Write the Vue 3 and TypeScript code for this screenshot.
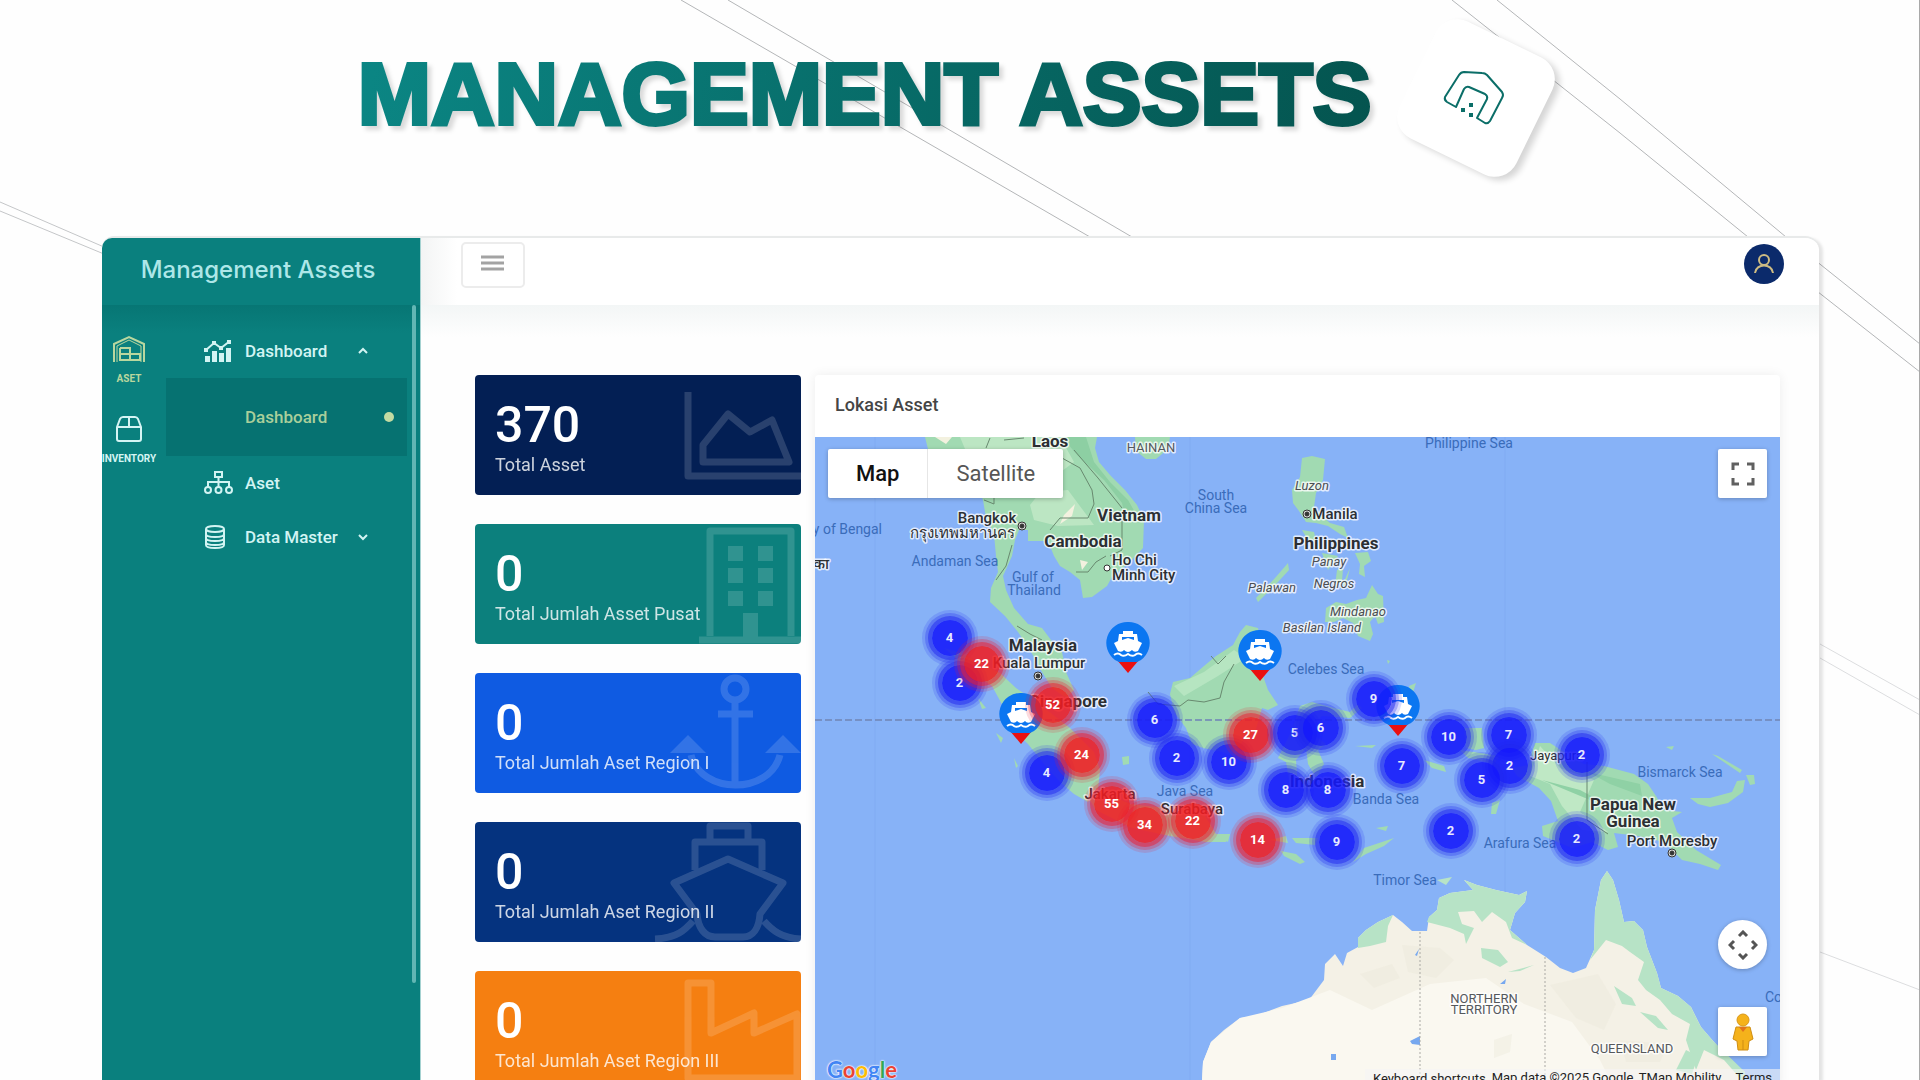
<script setup lang="ts">
interface Stat {
  value: number
  label: string
  tone: string
  shapes: string[]
  fills?: string[]
}

interface Cluster {
  x: number
  y: number
  count: number
  hot?: boolean
}

interface MapLabel {
  x: number
  y: number
  text: string
  kind: string
  anchor?: 'start' | 'middle' | 'end'
}

const stats: Stat[] = [
  {
    value: 370,
    label: 'Total Asset',
    tone: 'navy',
    shapes: ['M213 17V101H326', 'M228 87V70L253 39L275 57L297 45L314 87Z'],
  },
  {
    value: 0,
    label: 'Total Jumlah Asset Pusat',
    tone: 'teal',
    shapes: ['M235 112V7H316V112', 'M224 116H326'],
    fills: [
      'M253 22h15v15h-15zM283 22h15v15h-15zM253 44h15v15h-15zM283 44h15v15h-15zM253 67h15v15h-15zM283 67h15v15h-15z',
      'M268 89h15v24h-15z',
    ],
  },
  {
    value: 0,
    label: 'Total Jumlah Aset Region I',
    tone: 'blue',
    shapes: ['M260 5a11 11 0 1 1 0 22a11 11 0 1 1 0-22', 'M243 41H278', 'M260 28V110', 'M216 82C226 122 295 122 305 82'],
    fills: ['M213 62L231 80H195ZM308 62L326 80H290Z'],
  },
  {
    value: 0,
    label: 'Total Jumlah Aset Region II',
    tone: 'royal',
    shapes: [
      'M235 18V4H273V18',
      'M220 48V20H287V48',
      'M222 92L199 61L253 37L308 61L285 92C284 106 278 115 268 115H240C230 115 223 106 222 92Z',
      'M180 117C202 116 210 108 218 99',
      'M289 99C297 108 306 116 326 117',
    ],
  },
  {
    value: 0,
    label: 'Total Jumlah Aset Region III',
    tone: 'orange',
    shapes: ['M213 12H236V62L279 42V62L322 43V107H213Z'],
  },
]

const clusters: Cluster[] = [
  { x: 135, y: 201, count: 4 },
  { x: 145, y: 246, count: 2 },
  { x: 167, y: 227, count: 22, hot: true },
  { x: 238, y: 268, count: 52, hot: true },
  { x: 232, y: 336, count: 4 },
  { x: 267, y: 318, count: 24, hot: true },
  { x: 297, y: 367, count: 55, hot: true },
  { x: 330, y: 388, count: 34, hot: true },
  { x: 378, y: 384, count: 22, hot: true },
  { x: 443, y: 403, count: 14, hot: true },
  { x: 340, y: 283, count: 6 },
  { x: 362, y: 321, count: 2 },
  { x: 414, y: 325, count: 10 },
  { x: 436, y: 298, count: 27, hot: true },
  { x: 480, y: 296, count: 5 },
  { x: 506, y: 291, count: 6 },
  { x: 471, y: 353, count: 8 },
  { x: 513, y: 353, count: 8 },
  { x: 522, y: 405, count: 9 },
  { x: 559, y: 262, count: 9 },
  { x: 587, y: 329, count: 7 },
  { x: 634, y: 300, count: 10 },
  { x: 694, y: 298, count: 7 },
  { x: 695, y: 329, count: 2 },
  { x: 667, y: 343, count: 5 },
  { x: 636, y: 394, count: 2 },
  { x: 767, y: 318, count: 2 },
  { x: 762, y: 402, count: 2 },
]

const ships = [
  { x: 313, y: 206 },
  { x: 445, y: 214 },
  { x: 206, y: 277 },
  { x: 583, y: 269 },
]

const labels: MapLabel[] = [
  { x: 1050, y: 447, text: 'Laos', kind: 'country' },
  { x: 1129, y: 521, text: 'Vietnam', kind: 'country' },
  { x: 1083, y: 547, text: 'Cambodia', kind: 'country' },
  { x: 1043, y: 651, text: 'Malaysia', kind: 'country' },
  { x: 1107, y: 707, text: 'Singapore', kind: 'country', anchor: 'end' },
  { x: 1336, y: 549, text: 'Philippines', kind: 'country' },
  { x: 1327, y: 787, text: 'Indonesia', kind: 'country' },
  { x: 1633, y: 810, text: 'Papua New', kind: 'country' },
  { x: 1633, y: 827, text: 'Guinea', kind: 'country' },
  { x: 987, y: 523, text: 'Bangkok', kind: 'city' },
  { x: 962, y: 538, text: 'กรุงเทพมหานคร', kind: 'city' },
  { x: 829, y: 569, text: 'का', kind: 'city', anchor: 'end' },
  { x: 1112, y: 565, text: 'Ho Chi', kind: 'city', anchor: 'start' },
  { x: 1112, y: 580, text: 'Minh City', kind: 'city', anchor: 'start' },
  { x: 1039, y: 668, text: 'Kuala Lumpur', kind: 'city' },
  { x: 1335, y: 519, text: 'Manila', kind: 'city' },
  { x: 1110, y: 799, text: 'Jakarta', kind: 'city' },
  { x: 1192, y: 814, text: 'Surabaya', kind: 'city' },
  { x: 1672, y: 846, text: 'Port Moresby', kind: 'city' },
  { x: 1530, y: 760, text: 'Jayapura', kind: 'town', anchor: 'start' },
  { x: 1312, y: 490, text: 'Luzon', kind: 'island' },
  { x: 1329, y: 566, text: 'Panay', kind: 'island' },
  { x: 1334, y: 588, text: 'Negros', kind: 'island' },
  { x: 1272, y: 592, text: 'Palawan', kind: 'island' },
  { x: 1358, y: 616, text: 'Mindanao', kind: 'island' },
  { x: 1322, y: 632, text: 'Basilan Island', kind: 'island' },
  { x: 882, y: 534, text: 'y of Bengal', kind: 'sea', anchor: 'end' },
  { x: 955, y: 566, text: 'Andaman Sea', kind: 'sea' },
  { x: 1033, y: 582, text: 'Gulf of', kind: 'sea' },
  { x: 1034, y: 595, text: 'Thailand', kind: 'sea' },
  { x: 1216, y: 500, text: 'South', kind: 'sea' },
  { x: 1216, y: 513, text: 'China Sea', kind: 'sea' },
  { x: 1469, y: 448, text: 'Philippine Sea', kind: 'sea' },
  { x: 1326, y: 674, text: 'Celebes Sea', kind: 'sea' },
  { x: 1185, y: 796, text: 'Java Sea', kind: 'sea' },
  { x: 1386, y: 804, text: 'Banda Sea', kind: 'sea' },
  { x: 1680, y: 777, text: 'Bismarck Sea', kind: 'sea' },
  { x: 1520, y: 848, text: 'Arafura Sea', kind: 'sea' },
  { x: 1405, y: 885, text: 'Timor Sea', kind: 'sea' },
  { x: 1765, y: 1002, text: 'Coral Sea', kind: 'sea', anchor: 'start' },
  { x: 1151, y: 452, text: 'HAINAN', kind: 'state' },
  { x: 1484, y: 1003, text: 'NORTHERN', kind: 'state' },
  { x: 1484, y: 1014, text: 'TERRITORY', kind: 'state' },
  { x: 1632, y: 1053, text: 'QUEENSLAND', kind: 'state' },
]

const capitals = [
  [1022, 526],
  [1038, 676],
  [1307, 514],
  [1672, 853],
]
</script>

<template>
  <div class="page">
    <svg class="lines" aria-hidden="true">
      <g stroke="#b4b6b8" stroke-width="1">
        <path d="M681 0L1090 237M728 0L1132 237" />
        <path d="M1452 0L1620 133L1748 237L1920 372M1497 0L1620 99L1786 237L1920 344" />
        <path d="M0 202L104 247M0 211L104 254" stroke="#c4c6c8" />
        <path d="M1820 644L1920 700M1820 658L1920 715M1820 952L1920 990" stroke="#dcdddf" />
      </g>
    </svg>

    <header class="hero">
      <h1>MANAGEMENT ASSETS</h1>
      <div class="badge">
        <svg width="130" height="130" viewBox="0 0 130 130" fill="none" stroke="#0b6e68" stroke-width="2" stroke-linejoin="round" aria-hidden="true">
          <path d="M45 74L36 69Q33 67 34 64L48 42Q50 39 53 39L71 40Q74 40 76 42L91 59Q93 62 91 65L79 88Q77 91 74 90L66 85L76 66Q77 63 74 61L58 54Q55 53 53 56Z" />
          <path d="M58 70h4v4h-4zM50 75h4v4h-4zM58 80h4v4h-4z" fill="#0b6e68" stroke="none" />
        </svg>
      </div>
    </header>

    <div class="panel">
      <aside class="sidebar">
        <div class="brand">Management Assets</div>
        <div class="side-body">
          <nav class="rail" aria-label="Modul">
            <a href="#aset" class="rail-item current">
              <svg width="34" height="28" viewBox="0 0 34 28" fill="none" stroke="currentColor" stroke-width="2" aria-hidden="true">
                <path d="M2 27V9L17 2L32 9V27M8 13H18V25H8V13M8 19H28V25H8M18 19V25" />
                <path d="M5 27V11L17 5L29 11V27" stroke-width="1" />
              </svg>
              ASET
            </a>
            <a href="#inventory" class="rail-item">
              <svg width="34" height="28" viewBox="0 0 34 28" fill="none" stroke="currentColor" stroke-width="2" stroke-linejoin="round" aria-hidden="true">
                <path d="M5 12L8 4Q9 2 11 2H23Q25 2 26 4L29 12V24Q29 26 27 26H7Q5 26 5 24ZM5 12H29M17 2V12" />
              </svg>
              INVENTORY
            </a>
          </nav>
          <nav class="menu" aria-label="Menu">
            <button type="button" class="menu-item first">
              <svg width="29" height="24" viewBox="0 0 29 24" aria-hidden="true">
                <path d="M1 17h5v6H1zM8 12h5v11H8zM15 14h5v9h-5zM22 9h5v14h-5z" fill="currentColor" />
                <path d="M2 11L10 4L17 9L26 2" fill="none" stroke="currentColor" stroke-width="2" />
                <path d="M0 9h4v4H0zM8 2h4v4H8zM15 7h4v4h-4zM23 1h4v4h-4z" fill="currentColor" />
              </svg>
              <span class="menu-text">Dashboard</span>
              <svg class="chevron" width="12" height="8" viewBox="0 0 12 8" fill="none" stroke="currentColor" stroke-width="2" aria-hidden="true"><path d="M2 6L6 2L10 6" /></svg>
            </button>
            <a href="#dashboard" class="submenu">Dashboard<i class="dot"></i></a>
            <a href="#daftar" class="menu-item">
              <svg width="29" height="24" viewBox="0 0 29 24" fill="none" stroke="currentColor" stroke-width="2" aria-hidden="true">
                <path d="M11 1h7v5h-7zM14.500 6V17M4 16V11H25V16" />
                <circle cx="4" cy="19" r="3" /><circle cx="14.500" cy="19" r="3" /><circle cx="25" cy="19" r="3" />
              </svg>
              <span class="menu-text">Aset</span>
            </a>
            <button type="button" class="menu-item">
              <svg width="29" height="24" viewBox="0 0 29 24" fill="none" stroke="currentColor" stroke-width="2" aria-hidden="true">
                <ellipse cx="11" cy="4" rx="9" ry="3" />
                <path d="M2 4V20C2 24 20 24 20 20V4M2 9C2 13 20 13 20 9M2 13C2 17 20 17 20 13M2 17C2 21 20 21 20 17" />
              </svg>
              <span class="menu-text">Data Master</span>
              <svg class="chevron" width="12" height="8" viewBox="0 0 12 8" fill="none" stroke="currentColor" stroke-width="2" aria-hidden="true"><path d="M2 2L6 6L10 2" /></svg>
            </button>
          </nav>
          <div class="scrollbar"></div>
        </div>
      </aside>

      <div class="main">
        <div class="topbar">
          <button type="button" class="burger" aria-label="Menu">
            <svg width="24" height="16" viewBox="0 0 24 16" stroke="#a3a3a3" stroke-width="3" aria-hidden="true"><path d="M0 2H23M0 8H23M0 14H23" /></svg>
          </button>
          <button type="button" class="avatar" aria-label="Profil">
            <svg width="24" height="22" viewBox="0 0 24 22" fill="none" stroke="#cdbb83" stroke-width="2" aria-hidden="true">
              <circle cx="12" cy="7" r="5" /><path d="M3 20C4 10 20 10 21 20" />
            </svg>
          </button>
        </div>

        <div class="content">
          <div class="stats">
            <article v-for="stat in stats" :key="stat.label" class="stat" :class="stat.tone">
              <svg class="watermark" width="326" height="120" viewBox="0 0 326 120" aria-hidden="true">
                <path v-for="d in stat.shapes" :key="d" :d="d" fill="none" stroke="#fff" stroke-width="7" stroke-linejoin="round" />
                <path v-for="d in stat.fills" :key="d" :d="d" fill="#fff" />
              </svg>
              <strong>{{ stat.value }}</strong>
              <span>{{ stat.label }}</span>
            </article>
          </div>

          <section class="map-card">
            <h2>Lokasi Asset</h2>
            <div class="map">
              <div class="canvas">
                <svg class="terrain" width="965" height="660" viewBox="815 437 965 660" aria-label="Peta lokasi asset">
                  <g stroke="#80abf2" stroke-width="1"><path d="M875 437V1100M1190 437V1100M1505 437V1100" /></g>
                  <g fill="#a1dab2">
                    <path d="M925 437L928 449L940 455L950 452L962 470L975 480L983 500L986 518L994 534L996 556L998 572L991 588L990 602L1005 616L1018 632L1030 650L1042 672L1052 688L1066 698L1074 690L1066 672L1062 652L1054 644L1042 628L1028 624L1014 608L1006 590L1003 576L1012 556L1015 540L1019 530L1028 530L1028 541L1048 541L1054 556L1060 566L1070 572L1080 580L1083 598L1092 597L1107 586L1112 577L1130 562L1143 548L1144 520L1137 505L1125 490L1110 475L1099 462L1095 448L1097 437Z" />
                    <path d="M1135 437H1170L1168 449L1156 459H1146L1136 451Z" />
                    <path d="M1302 458L1312 456L1325 459L1323 480L1316 493L1314 507L1322 516L1330 523L1344 527L1348 538L1340 534L1328 526L1316 523L1306 522L1299 511L1293 503L1292 490L1300 477Z" />
                    <path d="M1302 530L1314 532L1316 541L1308 540ZM1355 553L1368 552L1371 561L1364 566L1365 577L1359 574L1360 564ZM1322 553L1338 556L1328 570ZM1337 570L1343 568L1342 582L1335 586ZM1350 568L1346 584L1342 586ZM1288 563L1289 570L1278 582L1258 602L1256 598L1275 578Z" />
                    <path d="M1372 585L1378 594L1383 596L1384 622L1378 624L1375 616L1370 622L1373 634L1370 641L1358 636L1353 623L1343 618L1334 622L1325 622L1326 608L1336 602L1346 604L1357 600L1366 598Z" />
                    <path d="M1246 625L1258 628L1262 650L1265 660L1263 676L1268 690L1278 705L1268 710L1262 708L1258 722L1254 736L1243 740L1235 757L1222 752L1203 748L1192 744L1186 728L1174 712L1170 694L1173 682L1190 678L1204 666L1216 656L1233 645L1240 632Z" />
                    <path d="M944 648L962 653L978 662L1000 673L1016 688L1036 702L1052 714L1070 728L1082 740L1094 752L1100 770L1098 790L1088 802L1074 794L1060 782L1044 764L1028 744L1012 728L1004 708L992 686L972 672Z" />
                    <path d="M1086 794L1104 792L1130 804L1166 808L1180 806L1204 814L1216 834L1230 834L1226 842L1206 842L1170 836L1132 828L1096 810Z" />
                    <path d="M1218 836L1230 834L1228 842ZM1270 840L1286 836L1288 843ZM1292 838L1318 838L1315 845L1296 843ZM1281 851L1296 854L1305 862L1300 864L1284 856ZM1353 862L1364 848L1394 838L1384 846L1366 854ZM1376 828L1388 826L1386 831ZM1355 746L1376 745L1372 748ZM1122 757L1129 756L1129 764L1123 765Z" />
                    <path d="M1300 706L1312 702L1334 708L1350 712L1358 704L1362 708L1350 718L1322 716L1308 730L1326 744L1318 750L1324 764L1316 778L1308 764L1306 748L1296 760L1298 786L1290 786L1286 762L1278 758L1290 734Z" />
                    <path d="M996 733L1003 738L1001 743ZM1014 758L1018 766L1016 768ZM978 698L986 708L982 709ZM1409 686L1416 683L1412 696ZM1424 760L1444 766L1446 772L1432 768ZM1464 728L1482 728L1484 748L1476 750L1466 748ZM1460 750L1500 756L1494 764L1468 758ZM1492 803L1500 800L1496 814L1491 814ZM1387 660L1390 661L1388 664Z" />
                    <path d="M1535 743L1550 743L1564 752L1584 764L1604 766L1634 774L1648 784L1656 796L1664 810L1682 812L1672 818L1677 832L1696 850L1721 865L1718 870L1700 864L1682 860L1664 842L1638 836L1614 833L1618 847L1608 850L1592 842L1572 848L1543 836L1542 826L1558 821L1551 801L1539 788L1517 776L1512 768L1528 765Z" />
                    <path d="M1690 798L1710 798L1732 792L1737 781L1745 780L1743 792L1728 803L1710 807L1698 804ZM1712 754L1718 756L1742 770L1740 773ZM1746 775L1754 775L1755 784L1750 785ZM1666 747L1674 746L1672 750Z" />
                  </g>
                  <path d="M960 437L978 480L1020 494L1068 490L1094 525L1058 526L1034 520L1030 505L1050 480L1074 462L1060 437Z" fill="#bce6c3" />
                  <path d="M1062 437L1078 456L1104 480L1122 503L1126 520L1136 514L1128 500L1110 482L1094 462L1086 437Z" fill="#8dcfa3" />
                  <path d="M1174 686L1204 672L1234 650L1246 658L1218 676L1184 696Z" fill="#b6e5c1" />
                  <path d="M1540 746L1560 768L1594 780L1580 812L1608 832L1582 830L1562 806L1550 784L1530 776Z" fill="#bfe8c5" />
                  <path d="M1588 772L1640 784L1642 796L1610 784ZM1542 780L1580 790L1610 806L1590 800Z" fill="#8fd1a5" />
                  <path d="M935 437L952 437L946 444ZM1064 515L1075 504L1072 516L1060 524ZM1080 560L1088 562L1082 570Z" fill="#f3f1df" />
                  <g fill="none" stroke="#68896f" stroke-width="1">
                    <path d="M984 500L994 504V494M990 438L986 448M1062 458L1080 468L1092 490L1094 504L1088 518H1060L1050 530M1074 450L1098 478L1114 498L1122 508M1004 440L1024 438M1012 545L1006 566L996 580M1106 556L1096 562L1088 572L1076 572M1017 626L1030 634L1042 640M1122 518V550L1110 556" />
                    <path d="M1148 692L1158 704L1180 706L1188 700L1204 702L1220 698L1224 682L1234 664M1211 656L1218 664L1226 656M1587 762V820L1608 834" />
                  </g>

                  <path d="M1201 1100L1203 1062L1211 1042L1224 1030L1240 1018L1256 1016L1282 1006L1309 1000L1324 980L1325 964L1335 954L1343 966L1347 953L1358 947V938L1366 930L1378 922L1393 915L1402 922L1412 931L1427 931L1429 917L1437 910L1439 898L1450 893L1473 890L1464 880L1477 885L1496 890L1519 895L1527 891L1525 902L1515 913L1510 930L1527 945L1546 957L1560 968L1573 973L1586 968L1594 950L1595 910L1601 880L1607 871L1613 880L1619 900L1624 922L1634 921L1643 930L1647 947L1657 973L1661 988L1678 996L1691 1007L1701 1027L1714 1042L1730 1060L1745 1072V1100Z" fill="#f4f1e6" />
                  <path d="M1201 1100L1203 1062L1211 1042L1240 1018L1282 1008L1330 990L1372 1010L1430 984L1486 978L1524 1004L1572 1022L1600 1060L1620 1100Z" fill="#faf8f0" />
                  <g fill="#b7e3c6">
                    <path d="M1437 880L1452 877L1446 885Z" />
                    <path d="M1427 922L1429 917L1437 910L1439 898L1450 893L1473 890L1464 880L1477 885L1496 890L1519 895L1527 891L1525 902L1515 913L1510 930L1527 945L1512 938L1506 922L1492 912L1482 922L1474 911L1458 912L1462 924L1474 928L1466 944L1464 934L1450 928Z" />
                    <path d="M1358 948V938L1366 930L1378 922L1393 915L1388 926L1386 942L1370 946Z" />
                    <path d="M1590 960L1594 950L1595 910L1601 880L1607 871L1613 880L1619 900L1624 922L1634 921L1643 930L1647 947L1657 973L1661 988L1678 996L1691 1007L1701 1027L1714 1042L1745 1072V1084L1724 1060L1704 1050L1696 1070L1686 1040L1690 1024L1672 1014L1660 1000L1646 990L1638 980L1644 962L1630 952L1622 946L1606 940Z" />
                    <path d="M1481 948L1498 950L1508 962L1500 967L1482 958ZM1508 972L1534 965L1520 971ZM1614 986L1632 998L1636 1006L1622 1004ZM1640 1012L1656 1016L1668 1030L1658 1028ZM1686 1050L1698 1056L1692 1074L1676 1070Z" />
                  </g>
                  <g fill="#ece8da" opacity=".4">
                    <path d="M1402 945L1440 948L1454 960L1436 978L1408 972ZM1550 985L1598 974L1616 1004L1604 1030L1576 1018ZM1620 1040L1668 1044L1660 1062L1626 1062ZM1494 1040L1512 1034L1510 1052L1494 1058ZM1360 974L1392 964L1400 978L1374 988Z" />
                  </g>
                  <path d="M1410 1041L1420 1036V1045L1412 1044ZM1331 1054H1336V1060H1331ZM1500 984L1506 979L1505 984ZM1415 955L1419 949L1417 956Z" fill="#77a8ef" />
                  <path d="M1420 932V1080M1545 957V1080" stroke="#aaa9a4" stroke-width="1" stroke-dasharray="2 2" />
                  <path d="M815 720H1780" stroke="#7288b8" stroke-width="2" stroke-dasharray="7 3" opacity=".8" />

                  <g fill="none" stroke="#333" stroke-width="1">
                    <g v-for="[x, y] in capitals" :key="x">
                      <circle :cx="x" :cy="y" r="4" fill="#ddd" /><circle :cx="x" :cy="y" r="2" fill="#333" />
                    </g>
                    <circle cx="1107" cy="568" r="3" fill="#fff" />
                  </g>
                  <text v-for="label in labels" :key="label.text" :x="label.x" :y="label.y" :class="label.kind" :text-anchor="label.anchor ?? 'middle'">{{ label.text }}</text>
                </svg>

                <svg v-for="ship in ships" :key="ship.x" class="ship" :style="{ left: ship.x + 'px', top: ship.y + 'px' }" width="44" height="54" viewBox="0 0 44 54" aria-hidden="true">
                  <path d="M11 39H33L22 52Z" fill="#ea1010" />
                  <path d="M22 1A21 21 0 0 1 35 39L31 41H13L9 39A21 21 0 0 1 22 1Z" fill="#0b76f1" />
                  <path d="M17 10H27V13H31L32 20L36 22L32 30Q28 32 26 29Q22 33 18 29Q16 32 12 30L8 22L12 20L13 13H17ZM16 16V19L22 17L28 19V16Z" fill="#fff" fill-rule="evenodd" />
                  <path d="M8 34Q12 31 15 34Q18 36 22 33Q26 36 29 34Q32 31 36 34" fill="none" stroke="#fff" stroke-width="2" />
                </svg>
                <button v-for="(c, i) in clusters" :key="i" type="button" class="cluster" :class="{ hot: c.hot }" :style="{ left: c.x + 'px', top: c.y + 'px' }">{{ c.count }}</button>
              </div>

              <div class="map-type">
                <button type="button" class="selected">Map</button>
                <button type="button">Satellite</button>
              </div>
              <button type="button" class="control fullscreen" aria-label="Layar penuh">
                <svg width="24" height="24" viewBox="0 0 24 24" fill="none" stroke="#606060" stroke-width="3" aria-hidden="true"><path d="M2 8V2H8M16 2H22V8M22 16V22H16M8 22H2V16" /></svg>
              </button>
              <button type="button" class="control pan" aria-label="Geser peta">
                <svg width="30" height="30" viewBox="0 0 30 30" fill="none" stroke="#555" stroke-width="3" aria-hidden="true"><path d="M11 6L15 2L19 6M11 24L15 28L19 24M6 11L2 15L6 19M24 11L28 15L24 19" /></svg>
              </button>
              <button type="button" class="control pegman" aria-label="Street View">
                <svg width="24" height="40" viewBox="0 0 24 40" aria-hidden="true">
                  <path d="M5 15H19L22 27L18 29L17 38H7L6 29L2 27Z" fill="#f5b21b" stroke="#cf8d12" stroke-width="1" />
                  <circle cx="12" cy="8" r="6" fill="#f5b21b" stroke="#d9981a" stroke-width="1" />
                  <path d="M8 15L12 20L16 15Z" fill="#e2731d" /><path d="M12 28V38" stroke="#cf8d12" />
                </svg>
              </button>
              <div class="google" aria-label="Google"><b class="g1">G</b><b class="g2">o</b><b class="g3">o</b><b class="g1">g</b><b class="g4">l</b><b class="g2">e</b></div>
              <div class="credits">
                <button type="button">Keyboard shortcuts</button>
                <span>Map data ©2025 Google, TMap Mobility</span>
                <a href="#terms">Terms</a>
              </div>
            </div>
          </section>
        </div>
      </div>
    </div>
  </div>
</template>

<style>
body {
  margin: 0;
  background: #fefefe;
}
</style>

<style scoped>
* {
  box-sizing: border-box;
}

button {
  margin: 0;
  padding: 0;
  border: 0;
  font-family: inherit;
  cursor: pointer;
}

a {
  color: inherit;
  text-decoration: none;
}

.page {
  position: relative;
  display: flex;
  flex-direction: column;
  height: 100vh;
  overflow: hidden;
  border-right: 1px solid #a9a9a9;
  background: #fefefe;
  font-family: Roboto, 'Noto Sans', sans-serif;
}

.lines {
  position: absolute;
  inset: 0;
  width: 100%;
  height: 100%;
  fill: none;
}

.hero {
  position: relative;
  display: flex;
  flex: none;
  align-items: center;
  justify-content: center;
  gap: 36px;
  height: 236px;
  padding: 0 20px 48px 0;
}

h1 {
  margin: 0;
  background: linear-gradient(100deg, #0b8684, #04544f);
  -webkit-background-clip: text;
  background-clip: text;
  color: transparent;
  -webkit-text-stroke: 4px transparent;
  filter: drop-shadow(4px 4px 2px rgba(0, 0, 0, 0.14));
  font-family: 'Liberation Sans', Arial, sans-serif;
  font-size: 88px;
  font-weight: 700;
  line-height: 104px;
}

.badge {
  position: relative;
  width: 130px;
  height: 130px;
  margin: 8px 0 0 4px;
}

.badge::before {
  position: absolute;
  inset: 0;
  border-radius: 24px;
  background: #fff;
  box-shadow: 6px 1px 6px rgba(0, 0, 0, 0.16);
  content: '';
  transform: rotate(26deg);
}

.badge svg {
  position: relative;
  display: block;
}

.panel {
  position: relative;
  display: flex;
  flex: 1;
  margin: 0 100px 0 102px;
  border-top: 2px solid #e8eaea;
  border-radius: 12px 14px 0 0;
  background: #fff;
  box-shadow: 4px 2px 3px rgba(0, 0, 0, 0.1);
  min-height: 0;
}

.sidebar {
  display: flex;
  flex: none;
  flex-direction: column;
  width: 319px;
  border-right: 1px solid #a5d2d1;
  border-radius: 10px 0 0 0;
  background: #0a807e;
  overflow: hidden;
}

.brand {
  flex: none;
  height: 67px;
  padding-right: 6px;
  color: #aee7e8;
  font-family: Inter, sans-serif;
  font-size: 24px;
  font-weight: 500;
  line-height: 64px;
  text-align: center;
}

.side-body {
  display: flex;
  flex: 1;
  background: linear-gradient(#077674, #0a807e 28px);
}

.rail {
  display: flex;
  flex: none;
  flex-direction: column;
  gap: 30px;
  width: 54px;
  padding-top: 30px;
}

.rail-item {
  display: flex;
  flex-direction: column;
  align-items: center;
  gap: 10px;
  color: #d5f5f4;
  font-size: 10px;
  font-weight: 700;
  line-height: 12px;
}

.rail-item.current {
  color: #b9d79f;
}

.menu {
  flex: 1;
  padding: 19px 5px 0 10px;
}

.menu-item {
  display: flex;
  align-items: center;
  width: 100%;
  height: 54px;
  padding-left: 38px;
  background: none;
  color: #d2f4f3;
  font-size: 17px;
  font-weight: 500;
  text-align: left;
}

.menu-text {
  width: 112px;
  margin-left: 12px;
}

.submenu {
  display: flex;
  align-items: center;
  justify-content: space-between;
  height: 78px;
  padding: 0 13px 0 79px;
  background: #067271;
  color: #a9cf9b;
  font-size: 17px;
  font-weight: 500;
}

.dot {
  width: 10px;
  height: 10px;
  border-radius: 50%;
  background: #c3dba2;
}

.scrollbar {
  width: 4px;
  height: 678px;
  margin-right: 4px;
  border-radius: 2px;
  background: #62b6b4;
}

.main {
  display: flex;
  flex: 1;
  flex-direction: column;
  min-width: 0;
}

.topbar {
  display: flex;
  flex: none;
  align-items: flex-start;
  justify-content: space-between;
  height: 67px;
  padding: 4px 35px 0 40px;
  border-radius: 0 14px 0 0;
  background: linear-gradient(90deg, #f3f4f4, #fff 36px);
}

.burger {
  display: flex;
  align-items: center;
  justify-content: center;
  width: 64px;
  height: 46px;
  padding-bottom: 4px;
  border: 2px solid #ececec;
  border-radius: 5px;
  background: #fff;
}

.avatar {
  display: flex;
  align-items: center;
  justify-content: center;
  width: 40px;
  height: 40px;
  margin-top: 2px;
  border-radius: 50%;
  background: #0b2a6b;
}

.content {
  display: flex;
  gap: 14px;
  align-items: flex-start;
  padding: 70px 39px 0 54px;
  background: linear-gradient(#f3f6f6, #fefefe 32px);
}

.stats {
  display: flex;
  flex: none;
  flex-direction: column;
  gap: 29px;
  width: 326px;
}

.stat {
  position: relative;
  display: flex;
  flex-direction: column;
  height: 120px;
  padding: 21px 20px 0;
  border-radius: 4px;
  color: #fff;
  overflow: hidden;
}

.stat strong {
  position: relative;
  font-size: 50px;
  font-weight: 500;
  line-height: 58px;
}

.stat span {
  position: relative;
  font-size: 18px;
  line-height: 22px;
  opacity: 0.8;
}

.watermark {
  position: absolute;
  top: 0;
  right: 0;
  opacity: 0.15;
}

.navy { background: #031f54; }
.teal { background: #0c807d; }
.blue { background: #0f5be2; }
.royal { background: #05337f; }
.orange { background: #f57f11; }

.map-card {
  flex: 1;
  min-width: 0;
  border-radius: 4px;
  background: #fff;
  box-shadow: 0 0 12px rgba(0, 0, 0, 0.07);
}

h2 {
  margin: 0;
  padding: 0 20px 2px;
  color: #454545;
  font-size: 18px;
  font-weight: 500;
  line-height: 60px;
}

.map {
  position: relative;
  height: 655px;
  background: #87b2f7;
  overflow: hidden;
}

.canvas {
  position: absolute;
  top: 0;
  left: 50%;
  width: 965px;
  height: 655px;
  margin-left: -483px;
}

.terrain {
  display: block;
}

text {
  fill: #2c2f33;
  stroke: rgba(255, 255, 255, 0.75);
  stroke-width: 3px;
  stroke-linejoin: round;
  paint-order: stroke;
}

.country {
  font-size: 17px;
  font-weight: 700;
}

.city {
  font-size: 15px;
  font-weight: 500;
}

.town {
  font-size: 13px;
}

.island {
  fill: #4a4e52;
  font-size: 13px;
  font-style: italic;
}

.sea {
  fill: #3a6cba;
  stroke: none;
  font-size: 14px;
}

.state {
  fill: #55585c;
  font-size: 13px;
}

.ship {
  position: absolute;
  margin: -22px 0 0 -22px;
}

.cluster {
  position: absolute;
  width: 36px;
  height: 36px;
  margin: -18px 0 0 -18px;
  padding-bottom: 2px;
  border-radius: 50%;
  background: rgba(20, 24, 250, 0.88);
  box-shadow:
    0 0 0 4px rgba(32, 40, 240, 0.5),
    0 0 0 7px rgba(32, 40, 240, 0.28),
    0 0 0 10px rgba(32, 40, 240, 0.16);
  color: #e6e8ff;
  font-size: 13px;
  font-weight: 700;
}

.cluster.hot {
  background: rgba(240, 28, 34, 0.88);
  box-shadow:
    0 0 0 4px rgba(236, 30, 50, 0.5),
    0 0 0 7px rgba(236, 30, 50, 0.28),
    0 0 0 10px rgba(236, 30, 50, 0.16);
  color: #fff;
}

.map-type {
  position: absolute;
  top: 12px;
  left: 13px;
  display: flex;
  border-radius: 2px;
  background: #fff;
  box-shadow: 0 1px 4px rgba(0, 0, 0, 0.25);
}

.map-type button {
  height: 49px;
  padding: 0 28px;
  background: none;
  color: #565656;
  font-size: 22px;
}

.map-type .selected {
  border-right: 1px solid #e6e6e6;
  color: #111;
  font-weight: 500;
}

.control {
  position: absolute;
  right: 13px;
  display: flex;
  align-items: center;
  justify-content: center;
  width: 49px;
  height: 49px;
  border-radius: 2px;
  background: #fff;
  box-shadow: 0 1px 4px rgba(0, 0, 0, 0.25);
}

.fullscreen {
  top: 12px;
}

.pan {
  top: 483px;
  border-radius: 50%;
}

.pegman {
  top: 570px;
}

.google {
  position: absolute;
  top: 618px;
  left: 12px;
  font-family: Lato, sans-serif;
  font-size: 22px;
  line-height: 30px;
  text-shadow: 0 0 2px #fff, 0 0 2px #fff, 0 0 1px #fff;
}

.google b { font-weight: 700; }
.g1 { color: #4285f4; }
.g2 { color: #ea4335; }
.g3 { color: #fbbc05; }
.g4 { color: #34a853; }

.credits {
  position: absolute;
  top: 632px;
  right: 0;
  display: flex;
  gap: 6px;
  padding: 0 8px;
  background: rgba(245, 245, 245, 0.6);
  color: #222;
  font-size: 13px;
  line-height: 18px;
}

.credits button {
  background: none;
  color: inherit;
  font-size: 13px;
}

.credits a {
  margin-left: 8px;
}
</style>
